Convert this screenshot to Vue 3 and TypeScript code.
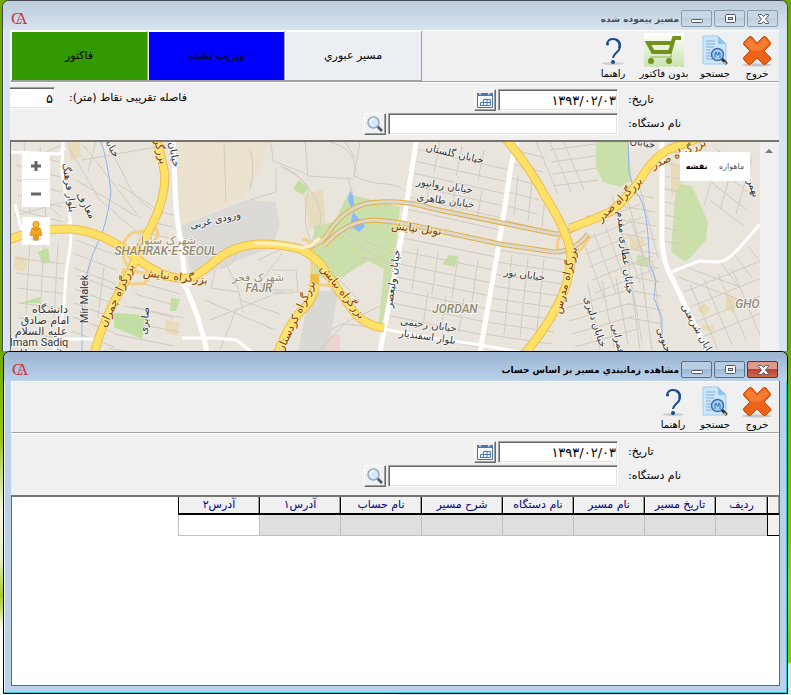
<script setup lang="ts">
import { ref } from 'vue'

type Tool = 'exit' | 'search' | 'cart' | 'help'
interface ToolItem { kind: Tool; label: string }
interface Win { id: string; title: string; tools: ToolItem[]; tracking: boolean }
interface MapLabel { t: string; x: number; y: number; r?: number; k?: string }

const exit: ToolItem = { kind: 'exit', label: 'خروج' }
const search: ToolItem = { kind: 'search', label: 'جستجو' }
const cart: ToolItem = { kind: 'cart', label: 'بدون فاکتور' }
const help: ToolItem = { kind: 'help', label: 'راهنما' }

const windows: Win[] = [
  { id: 'route', title: 'مسير پيموده شده', tools: [exit, search, cart, help], tracking: true },
  { id: 'schedule', title: 'مشاهده زمانبندي مسير بر اساس حساب', tools: [exit, search, help], tracking: false },
]

const date = ref('۱۳۹۳/۰۲/۰۳')
const device = ref('')
const distance = ref('۵')

const columns = [
  { label: 'رديف', cls: 'w-index' },
  { label: 'تاريخ مسير', cls: 'w-mid' },
  { label: 'نام مسير', cls: 'w-mid' },
  { label: 'نام دستگاه', cls: 'w-mid' },
  { label: 'شرح مسير', cls: 'w-wide' },
  { label: 'نام حساب', cls: 'w-wide' },
  { label: 'آدرس۱', cls: 'w-wide' },
  { label: 'آدرس۲', cls: 'w-wide' },
]

// Parallel side streets: start point, direction, step to the next one, count
function hatch(x: number, y: number, dx: number, dy: number, sx: number, sy: number, n: number): string {
  let d = ''
  for (let i = 0; i < n; i++) d += `M${x + sx * i} ${y + sy * i}l${dx} ${dy}`
  return d
}

const streets: string[] = [
  hatch(412, 148, 98, 22, -2, 12, 6),
  hatch(400, 224, 98, 20, -2, 13, 9),
  hatch(440, 142, -6, 30, 22, 4, 3),
  hatch(430, 180, -5, 30, 26, 5, 3),
  hatch(418, 248, -6, 42, 20, 4, 4),
  hatch(428, 292, -5, 34, 18, 3, 3),
  hatch(515, 150, 30, 8, -2, 14, 6),
  hatch(498, 250, 68, 10, -2, 12, 8),
  hatch(518, 175, -4, 40, 14, 6, 3),
  hatch(512, 255, -8, 80, 16, 2, 3),
  hatch(76, 275, 42, 16, -1, 14, 5),
  hatch(90, 262, -6, 50, 14, 5, 2),
  hatch(124, 306, 60, 12, -5, 14, 4),
  hatch(138, 282, 42, 12, -3, 12, 3),
  hatch(15, 150, 44, 12, 1, 15, 5),
  hatch(24, 142, 6, 70, 16, 5, 2),
  hatch(76, 240, 42, 16, -1, 14, 3),
  hatch(160, 212, 17, 4, -4, 11, 4),
  hatch(15, 258, 50, 6, 1, 15, 6),
  hatch(30, 240, -4, 74, 14, 2, 3),
  hatch(580, 228, 60, -24, 3, 13, 6),
  hatch(582, 238, 22, 60, 12, -5, 5),
  hatch(566, 308, 62, -18, 3, 13, 4),
  hatch(588, 284, 12, 66, 14, -3, 4),
  hatch(620, 192, 34, 6, 1, 14, 10),
  hatch(612, 196, 18, 70, 14, -4, 3),
  hatch(628, 260, 12, 90, 12, 0, 3),
  hatch(550, 150, 45, -6, 1, 12, 4),
  hatch(536, 142, 22, 52, 13, -2, 3),
  hatch(684, 292, 74, -30, 6, 15, 4),
  hatch(690, 284, 28, 66, 14, -5, 4),
  hatch(710, 200, 34, 26, 2, -17, 4),
  hatch(720, 150, -16, 56, 16, 4, 3),
  hatch(665, 150, 14, 3, 0, 13, 8),
  hatch(680, 265, 60, 22, -2, 12, 2),
  hatch(720, 262, 18, 24, 14, -8, 3),
  'M270 142q4 14 2 18l14 6q18 6 22 10l45 3M305 142l3 34M330 142q30 8 24 36M360 142l-6 34q18 8 32 8t24 12M347 176l6 18M355 158l-10-16',
  'M280 166q20 6 34 30t0 40q-4 10-2 14M284 168q26 14 24 24q-8 40 8 54M250 150q6 16 0 40M224 142l2 60M250 200l26-8v-24M258 260l30-14 8-4M272 270h24l2 22-26 2M250 292h34M282 254l-22 28 4 8h30',
  'M70 150l30 50 44 38M76 180l60 36M110 150q12 20 18 34t24 26M84 146l56 72M118 184l40 26M82 160l80-14M96 142l-8 30M28 160l32-14M14 216l50-14M34 192l26 24',
  'M215 270l-4 18 28 4 4 20M225 262l14 28M236 252q0 14-16 16M240 300l40 14M205 300l70 30M210 320l60-24M220 350l16-40',
  'M330 292l30-34 20 2M340 280l20 22M344 232l52 22M350 242l50 26M330 330l50-24M320 350l24-26 36 4',
]

const labels: MapLabel[] = [
  { t: 'بلوار فرهنگ', x: 66, y: 188, r: 82 },
  { t: 'معارف', x: 83, y: 207, r: 60 },
  { t: 'خيابان', x: 108, y: 147, r: 62 },
  { t: 'خيابان', x: 171, y: 155, r: 80 },
  { t: 'ورودى غربى', x: 216, y: 223, r: -13 },
  { t: 'Mir Malek', x: 88, y: 299, r: -90, k: 'latin' },
  { t: 'صابرى', x: 148, y: 321, r: -84 },
  { t: 'خيابان گلستان', x: 454, y: 157, r: 13 },
  { t: 'خيابان روانپور', x: 444, y: 189, r: 9 },
  { t: 'خيابان طاهرى', x: 445, y: 204, r: 8 },
  { t: 'خيابان وليعصر', x: 396, y: 279, r: -82 },
  { t: 'خيابان رحيمى', x: 428, y: 328, r: 8 },
  { t: 'بلوار اسفنديار', x: 427, y: 340, r: 8 },
  { t: 'خيابان نور', x: 524, y: 278, r: 8 },
  { t: 'خيابان عطارى مقدم', x: 622, y: 253, r: 83 },
  { t: 'خيابان دليرى', x: 592, y: 323, r: 72 },
  { t: 'عمرانى', x: 615, y: 340, r: 76 },
  { t: 'جنوبى', x: 661, y: 341, r: 70 },
  { t: 'خيابان شريعتى', x: 696, y: 333, r: 61 },
  { t: 'خيابان', x: 642, y: 146, r: 10 },
  { t: 'بهمن', x: 750, y: 188, r: 70 },
  { t: 'بزرگراه چمران', x: 120, y: 297, r: -65, k: 'hw' },
  { t: 'بزرگراه', x: 156, y: 148, r: 76, k: 'hw' },
  { t: 'بزرگراه نيايش', x: 175, y: 280, r: 7, k: 'hw' },
  { t: 'بزرگراه نيايش', x: 340, y: 294, r: 52, k: 'hw' },
  { t: 'بزرگراه کردستان', x: 299, y: 318, r: -65, k: 'hw' },
  { t: 'تونل نيايش', x: 416, y: 232, r: 7, k: 'hw' },
  { t: 'بزرگراه صدر', x: 622, y: 202, r: -44, k: 'hw' },
  { t: 'بزرگراه صدر', x: 680, y: 157, r: -24, k: 'hw' },
  { t: 'بزرگراه مدرس', x: 569, y: 281, r: -76, k: 'hw' },
  { t: 'شهرک سئول', x: 166, y: 244, k: 'area large' },
  { t: 'SHAHRAK-E-SEOUL', x: 166, y: 255, k: 'area latin-area' },
  { t: 'شهرک فجر', x: 258, y: 281, k: 'area large' },
  { t: 'FAJR', x: 259, y: 292, k: 'area latin-area' },
  { t: 'JORDAN', x: 455, y: 313, k: 'area latin-area' },
  { t: 'GHOBA', x: 755, y: 308, k: 'area latin-area' },
  { t: 'دانشگاه', x: 50, y: 313, k: 'large' },
  { t: 'امام صادق', x: 45, y: 324, k: 'large' },
  { t: 'عليه السلام', x: 41, y: 335, k: 'large' },
  { t: 'Imam Sadiq', x: 39, y: 346, k: 'latin' },
  { t: 'University', x: 44, y: 357, k: 'latin' },
]
</script>

<template>
  <main class="desktop">
    <section v-for="w in windows" :key="w.id" class="window" :class="w.tracking ? 'back' : 'front'">
      <header class="titlebar">
        <span class="logo" aria-hidden="true"><span>C</span><span class="logo-a">A</span></span>
        <h1 dir="rtl">{{ w.title }}</h1>
        <div class="controls">
          <button type="button" aria-label="Minimize">
            <svg width="30" height="16" viewBox="0 0 30 16"><rect x="9.500" y="8.500" width="11" height="3" rx="1" fill="#fff" stroke="#535666" /></svg>
          </button>
          <button type="button" aria-label="Maximize">
            <svg width="30" height="16" viewBox="0 0 30 16"><rect x="10.500" y="3.500" width="10" height="8" rx="1" fill="#fff" stroke="#535666" /><rect x="13.500" y="6.500" width="4" height="2" fill="#d5e0ec" stroke="#535666" /></svg>
          </button>
          <button type="button" aria-label="Close" class="close">
            <svg width="30" height="16" viewBox="0 0 30 16"><path d="M10.500 3.500h3l2 2 2-2h3v1l-3 3.500 3 3.500v1h-3l-2-2-2 2h-3v-1l3-3.500-3-3.500z" fill="#fff" stroke="#535666" /></svg>
          </button>
        </div>
      </header>

      <div class="body">
        <div class="toolbar">
          <div v-if="w.tracking" class="legend">
            <button type="button" class="green">فاکتور</button>
            <button type="button" class="blue">ويزيت نشده</button>
            <button type="button" class="pale">مسير عبوري</button>
          </div>
          <nav class="tools" dir="rtl">
            <button v-for="t in w.tools" :key="t.kind" type="button" class="tool" :class="t.kind">
              <svg v-if="t.kind === 'exit'" width="32" height="32" viewBox="0 0 32 32">
                <ellipse cx="16" cy="30" rx="15" ry="1.500" fill="#c4c4c4" />
                <path d="M3 7l5-5q1-1 3 0l5 6 6-6q1-1 3 0l4 5q1 1 0 3l-6 6 6 6q2 2 0 3l-4 4q-2 1-3 0l-6-6-6 6q-2 1-3 0l-4-4q-1-2 0-3l6-6-6-6q-1-1 0-3z" fill="#ed6318" stroke="#c74808" />
                <path d="M4 8l5-5 7 7 7-7 5 5-7 7q-6 1-11 0z" fill="#ff9650" opacity=".5" />
              </svg>
              <svg v-else-if="t.kind === 'search'" width="32" height="32" viewBox="0 0 32 32">
                <path d="M4 1h15l8 8v20H4z" fill="#cbe6fa" stroke="#a1caea" />
                <path d="M19 1v8h8z" fill="#8fc3ec" />
                <path d="M7 6h9M7 9h9M7 12h8M7 15h5M7 18h5M7 21h5M7 24h7" stroke="#7eafd7" />
                <path d="M23 24l4 4" stroke="#222f48" stroke-width="3" stroke-linecap="round" /><path d="M25 27l2 2" stroke="#d9a54c" stroke-width="2" />
                <circle cx="18.500" cy="19.500" r="6" fill="#a3d0fb" stroke="#456a9c" stroke-width="1.500" />
                <path d="M16 23v-5l1-1 1 3h1l1-3 1 1v5" fill="none" stroke="#2e72ba" />
              </svg>
              <svg v-else-if="t.kind === 'cart'" width="40" height="34" viewBox="0 0 40 34">
                <defs><linearGradient id="cartbg" x2="0" y2="1"><stop offset="0" stop-color="#fff" /><stop offset="1" stop-color="#c7e2ad" /></linearGradient></defs>
                <path d="M0 0h40v34H0z" fill="url(#cartbg)" />
                <path d="M37 5h-7l-4 14H9L4 10h23" fill="none" stroke="#71931c" stroke-width="4" />
                <path d="M26 20l2 4H6" fill="none" stroke="#9aae5b" />
                <circle cx="7" cy="28" r="3" fill="#71931c" /><circle cx="25" cy="28" r="3" fill="#71931c" />
                <path d="M3 34h36" stroke="#fff" stroke-dasharray="3 3" />
              </svg>
              <svg v-else width="32" height="32" viewBox="0 0 32 32">
                <ellipse cx="16" cy="28.500" rx="11" ry="1.500" fill="#ccc" />
                <path d="M10 9Q11 4 16 4q7 0 7 7 0 4-4 7-3 3-3 5" fill="none" stroke="#164b8c" stroke-width="2" />
                <path d="M19 5q5 2 3 8" fill="none" stroke="#164b8c" stroke-width="2" />
                <circle cx="10.500" cy="9" r="1.500" fill="#164b8c" /><circle cx="16" cy="27" r="2" fill="#164b8c" />
              </svg>
              <span>{{ t.label }}</span>
            </button>
          </nav>
        </div>

        <form class="filters" @submit.prevent>
          <div v-if="w.tracking" class="distance">
            <input id="distance" v-model="distance" dir="rtl" type="text">
            <label for="distance" dir="rtl">فاصله تقريبى نقاط (متر):</label>
          </div>
          <div class="fields">
            <div class="field short">
              <button type="button" aria-label="تقويم">
                <svg width="18" height="18" viewBox="0 0 18 18">
                  <path d="M1.500 2.500h15v14h-15z" fill="#f5faff" stroke="#587190" /><path d="M1 2h16v3H1z" fill="#4d79ad" /><path d="M4 1v3M13 1v3" stroke="#fff" />
                  <path d="M7.500 8.500h7v6h-10v-3h10M7.500 8.500v6M11 8.500v6" fill="none" stroke="#4779b5" />
                </svg>
              </button>
              <input :id="`${w.id}-date`" v-model="date" type="text">
              <label :for="`${w.id}-date`" dir="rtl">تاريخ:</label>
            </div>
            <div class="field">
              <button type="button" aria-label="جستجو">
                <svg width="18" height="18" viewBox="0 0 18 18"><path d="M11 11l5 5" stroke="#515960" stroke-width="2.500" /><circle cx="7.500" cy="7.500" r="5.500" fill="#d5eafc" stroke="#95a9c1" stroke-width="1.500" /><path d="M4 8q0-4 4-4" fill="none" stroke="#fff" stroke-width="1.500" /></svg>
              </button>
              <input :id="`${w.id}-device`" v-model="device" type="text">
              <label :for="`${w.id}-device`" dir="rtl">نام دستگاه:</label>
            </div>
          </div>
        </form>

        <div v-if="w.tracking" class="mapframe">
          <div class="map">
            <svg class="canvas" viewBox="11 142 749 210" preserveAspectRatio="xMidYMin slice">
              <path d="M0 130h800v240H0z" fill="#e9e5dc" />
              <path d="M178 142h90l-10 34-16 20-60 30-6-40z" fill="#ebe1cf" />
              <path d="M181 226l64-26 30 2 5 22-8 24-50 18-14 8-16 4-6-28z" fill="#dcdad6" />
              <path d="M310 290l28 2-10 60h-30z" fill="#dad8d4" />
              <path d="M303 195l20-6 3 36-16 4z" fill="#e8dcc0" />
              <path d="M314 226l20-4 14-28 52 13-6 58-10 66-6-2 6-60-16-8-36 22-18-10z" fill="#cadfaa" />
              <path d="M293 189l6-9 9 8-5 7zM442 264l7-9 8 1-2 11zM38 252l10-4 2 14-8 2zM114 313l32 2-4 24-28-12zM171 298l9 1-4 12h-6zM20 303l20-6v6z" fill="#c0dfa1" />
              <path d="M596 142h32l4 38-12 7-17-5-7-14zM676 183l16 3 16 36-2 18-20 22-15-10zM637 254l12 4-1 9-11-2z" fill="#cadfaa" />
              <path d="M671 160l12 6 2 12-14 20zM67 143l12-1 2 14-10 5zM15 255l13 3-4 14-10-3zM165 319l14 4-2 13-12-4zM630 237l15 2-3 12-12-3zM702 302l8 6-4 8-8-5zM702 324l12 2v7l-12-4zM727 293l10 6-4 14-8-5z" fill="#eadbb8" />
              <path d="M330 335h10v16h-14z" fill="#efd3d0" />
              <path d="M350 190q4 6 4 14l-2 6-4-10zM353 212l12 14-6 6-9-6z" fill="#8cb8ff" />
              <g fill="none">
                <path v-for="(d, i) in streets" :key="i" :d="d" stroke="#d0cbc1" />
                <path d="M101 142q6 16 10 50-4 32-12 48-14 28-17 65v47M628 142l1 30 5 18q12 10 14 46l2 30 6 14-2 18 8 20v20" stroke="#8ab4f8" />
                <g stroke="#fff" stroke-width="5">
                  <path d="M173 142l2 40q0 30 6 60l5 46q14 30 21 64M416 142l-15 98-21 112M517 142l-6 24-12 78-19 108M662 142v80q-2 36 10 56l20 42 16 32" />
                </g>
                <g stroke="#fff" stroke-width="3">
                  <path d="M63 142l-1 30 8 46q2 14 0 30l-4 26-2 32-5 30-6 16M11 152l48 2 6-6M15 204l8 32M71 222l-14 12M384 329l36 7 60 9 40 7M671 272l28-11 20 1q10-2 22-16l19-22M182 338l34 0 20 2 16 12M54 339h38l10 4M187 290q-12-12-4-16l8 12" />
                </g>
                <path d="M134 255q30-16 22-26l-24 4q-14 10-8 26t28 14M124 268q-4 20 4 16h14q6-2 10-12M314 256q-4-20-12-16M312 250v26M310 290q4-8 20-4M562 232q-6 8-4 18l12 4M570 256q10-2 20-20" stroke="#f3cf85" stroke-width="3" />
                <path d="M308 248q16-6 22-18 20-28 50-28 26-2 54 7l122 25q16 0 34-17M324 246q22-26 52-26l26 3 98 21 54 8q20 0 34-18" stroke="#e2af42" stroke-width="5" />
                <path d="M308 248q16-6 22-18 20-28 50-28 26-2 54 7l122 25q16 0 34-17M324 246q22-26 52-26l26 3 98 21 54 8q20 0 34-18" stroke="#dcd8cd" stroke-width="3" />
                <g stroke="#eebc48" stroke-width="9">
                  <path d="M156 137q6 22 9 38 0 24-12 48-10 18-17 35-8 20-20 40-18 36-22 58M6 241q28-13 64-12 30 2 60 24 18 16 38 23 12 4 24 1 8-3 28-20 18-12 38-13 24 0 42 5 12 6 20 14 14 22 29 42 12 20 35 23M315 274l-1 18q-4 12-14 20-16 20-24 46M505 138q24 28 40 58 22 34 26 58 0 28-16 56-14 26-36 50M570 228q18-6 40-16 14-10 30-32 14-24 30-31l34-13" />
                </g>
                <g stroke="#ffe168" stroke-width="7">
                  <path d="M156 137q6 22 9 38 0 24-12 48-10 18-17 35-8 20-20 40-18 36-22 58M6 241q28-13 64-12 30 2 60 24 18 16 38 23 12 4 24 1 8-3 28-20 18-12 38-13 24 0 42 5 12 6 20 14 14 22 29 42 12 20 35 23M315 284l-1 8q-4 12-14 20-16 20-24 46M505 138q24 28 40 58 22 34 26 58 0 28-16 56-14 26-36 50M570 228q18-6 40-16 14-10 30-32 14-24 30-31l34-13" />
                </g>
                <path d="M254 243q30 0 48 5l8-2 10-8" stroke="#fff0be" stroke-width="3" />
              </g>
              <text v-for="(l, i) in labels" :key="i" :x="l.x" :y="l.y" :class="l.k" :transform="`rotate(${l.r ?? 0} ${l.x} ${l.y})`">{{ l.t }}</text>
            </svg>
            <div class="zoom">
              <button type="button" aria-label="Zoom in"><svg width="12" height="12"><path d="M6 1v10M1 6h10" stroke="#666" stroke-width="3" /></svg></button>
              <button type="button" aria-label="Zoom out"><svg width="12" height="12"><path d="M1 6h10" stroke="#666" stroke-width="3" /></svg></button>
            </div>
            <button type="button" class="pegman" aria-label="Street View">
              <svg width="14" height="22" viewBox="0 0 14 22">
                <ellipse cx="7" cy="19" rx="5" ry="2" fill="#ddd" />
                <path d="M3 8h8l2 7-2 1-1-2-1 6H5l-1-6-1 2-2-1z" fill="#f8a520" stroke="#c98110" stroke-width=".7" />
                <circle cx="7" cy="4.500" r="3.200" fill="#fbb630" stroke="#c98110" stroke-width=".7" /><path d="M4 8l3 3 3-3M7 14v5" fill="none" stroke="#c98110" />
              </svg>
            </button>
            <div class="maptype" dir="rtl">
              <button type="button">ماهواره</button>
              <button type="button" class="on">نقشه</button>
            </div>
          </div>
          <div class="scroll"><button type="button" aria-label="Scroll up"><svg width="8" height="4"><path d="M0 4l4-4 4 4z" fill="#777" /></svg></button></div>
        </div>

        <div v-else class="grid" dir="rtl">
          <table>
            <thead>
              <tr><th class="w-mark"></th><th v-for="c in columns" :key="c.label" :class="c.cls">{{ c.label }}</th></tr>
            </thead>
            <tbody>
              <tr><td class="mark"></td><td v-for="c in columns" :key="c.label"></td></tr>
            </tbody>
          </table>
        </div>
      </div>
    </section>
  </main>
</template>

<style>
body { margin: 0; }
</style>

<style scoped>
* { box-sizing: border-box; }
.desktop {
  min-height: 100vh;
  padding: 0 3px 1px;
  font: 11px/14px "DejaVu Sans", "Liberation Sans", sans-serif;
  color: #000;
  background:
    linear-gradient(#6aa800 0 350px, #8dbd10 540px, #a4cc40 590px, #8fbf10 662px, #dfead0 664px) right / 50% 100% no-repeat,
    linear-gradient(#6fa800 0 350px, #9cc420 440px, #f4f8e4 510px, #e8f0c8 560px, #a5cb20 595px, #fff 630px) left / 50% 100% no-repeat;
}
button, input { font: inherit; color: inherit; margin: 0; padding: 0; border-radius: 0; }
svg { display: block; }
.window { border: 1px solid #424852; border-radius: 7px 7px 0 0; overflow: hidden; }
.back { margin-left: -1px; border-bottom: 0; background: #d7e4f1; box-shadow: inset 1px 1px #eef5fb; }
.front { padding-bottom: 7px; background: #bad1ea; border-color: #000; box-shadow: inset -1px -1px #28c7de, inset 1px 1px #f4faff; }
.titlebar { display: flex; align-items: center; gap: 2px; height: 29px; padding: 6px 9px 0 8px; background: linear-gradient(#bccbdb, #d7e4f1); }
.front .titlebar { background: linear-gradient(#99b4d1, #bad1ea); }
.logo { display: flex; margin-right: auto; font: 17px/18px "Liberation Serif", serif; color: #c9353c; }
.logo-a { margin-left: -7px; }
h1 { margin: 0; font-size: 9px; line-height: 16px; font-weight: bold; color: #4a4f58; }
.front h1 { color: #000; }
.controls { display: flex; gap: 2px; }
.controls button { display: grid; place-items: center; width: 31px; height: 17px; border: 1px solid #8c9db0; border-radius: 2px; background: linear-gradient(#c9d6e4 50%, #bdcddd 50%, #d0deeb); overflow: hidden; }
.front .controls button { border-color: #5b6e87; background: linear-gradient(#b9cde3 50%, #9cb6d2 50%, #b6cde4); }
.front .controls .close { border-color: #6b2a2a; background: linear-gradient(#e09a8c 45%, #bf4030 50%, #cf6a50); }
.body { margin: 0 8px 0 7px; background: #f0f0f0; }
.front .body { margin-right: 7px; border: solid #5f6873; border-width: 0 1px 1px 0; }
.toolbar { display: flex; justify-content: space-between; height: 52px; border: solid #fff; border-width: 1px 0 0 1px; border-bottom: 1px solid #a0a0a0; }
.legend { display: flex; width: 411px; }
.legend button { flex: 1; border: solid #a0a0a0; border-width: 0 1px 1px 0; box-shadow: inset 1px 1px #fff; }
.green { background: #339900; }
.blue { background: #0000ff; }
.pale { background: #ebeff3; }
.tools { display: flex; margin-left: auto; padding-right: 1px; }
.tool { display: flex; flex-direction: column; align-items: center; justify-content: flex-end; width: 42px; border: 0; background: none; white-space: nowrap; font-size: 10px; line-height: 14px; }
.tool.cart { width: 60px; }
.filters { display: flex; align-items: flex-start; height: 58px; border-top: 1px solid #fff; }
.front .filters { height: 62px; }
.distance { display: flex; align-items: center; gap: 14px; padding-top: 4px; }
.fields { display: grid; gap: 2px; flex: 1; padding-top: 6px; }
.front .fields { padding-top: 7px; }
.field { display: flex; align-items: center; justify-content: flex-end; gap: 2px; }
.field label { width: 151px; margin-left: 8px; text-align: left; }
input { height: 22px; border: 1px solid; border-color: #a0a0a0 #fff #fff #a0a0a0; box-shadow: inset 1px 1px #696969, inset -1px -1px #e3e3e3; background: #fff; outline: 0; }
.field input { width: 230px; padding-right: 1px; text-align: right; font-size: 13px; }
.short input { width: 120px; }
.distance input { width: 45px; height: 22px; border-left: 0; padding-right: 1px; box-shadow: inset 0 1px #696969, inset -1px -1px #e3e3e3; font-size: 13px; }
.field button { display: grid; place-items: center; width: 22px; height: 22px; border: 1px solid; border-color: #fff #696969 #696969 #fff; box-shadow: inset -1px -1px #a0a0a0; background: #f0f0f0; }
.mapframe { display: flex; height: 211px; border-top: 2px solid #757575; border-left: 1px solid #696969; overflow: hidden; }
.map { position: relative; flex: 1; overflow: hidden; }
.canvas { width: 100%; height: 210px; }
.canvas text { font: 10px "DejaVu Sans", sans-serif; text-anchor: middle; fill: #333; stroke: #fff; stroke-width: 2px; stroke-opacity: .6; paint-order: stroke; }
.canvas .large { font-size: 11px; }
.canvas .hw { font-size: 11px; fill: #7b3c08; stroke: #fff2b8; }
.canvas .latin { font: 11px Roboto, sans-serif; }
.canvas .area { fill: #918a74; }
.canvas .latin-area { font: italic 500 12px Roboto, sans-serif; }
.zoom, .pegman, .maptype { position: absolute; background: #fff; }
.zoom { left: 11px; top: 10px; width: 28px; }
.zoom button { display: grid; place-items: center; width: 28px; height: 27px; border: 0; background: none; }
.zoom button + button { height: 28px; border-top: 1px solid #e6e6e6; }
.pegman { display: grid; place-items: center; left: 11px; top: 75px; width: 28px; height: 28px; border: 0; }
.maptype { display: flex; align-items: center; justify-content: space-around; right: 10px; top: 10px; width: 70px; height: 29px; }
.maptype button { border: 0; background: none; font-size: 8px; color: #555; }
.maptype .on { color: #000; font-weight: bold; }
.scroll { width: 19px; background: #f0f0f0; }
.scroll button { display: grid; place-items: center; width: 18px; height: 17px; border: 0; background: none; }
.grid { height: 190px; border: solid #696969; border-width: 2px 0 0 1px; border-top-color: #757575; background: #fff; overflow: hidden; }
table { border-collapse: separate; border-spacing: 0; table-layout: fixed; width: 601px; }
th { height: 18px; padding: 0; border: solid #000; border-width: 0 0 2px 1px; box-shadow: inset 1px 0 #fff, inset -1px 0 #a0a0a0; font-weight: normal; font-size: 11px; line-height: 14px; color: #000080; background: #f0f0f0; }
td { height: 21px; padding: 0; border: solid #c0c0c0; border-width: 0 0 1px 1px; background: #dfdfdf; }
td:last-child { background: #fff; }
td.mark { background: #f0f0f0; border-color: #000; }
.w-mark { width: 12px; }
.w-index { width: 52px; }
.w-mid { width: 71px; }
.w-wide { width: 81px; }
</style>
